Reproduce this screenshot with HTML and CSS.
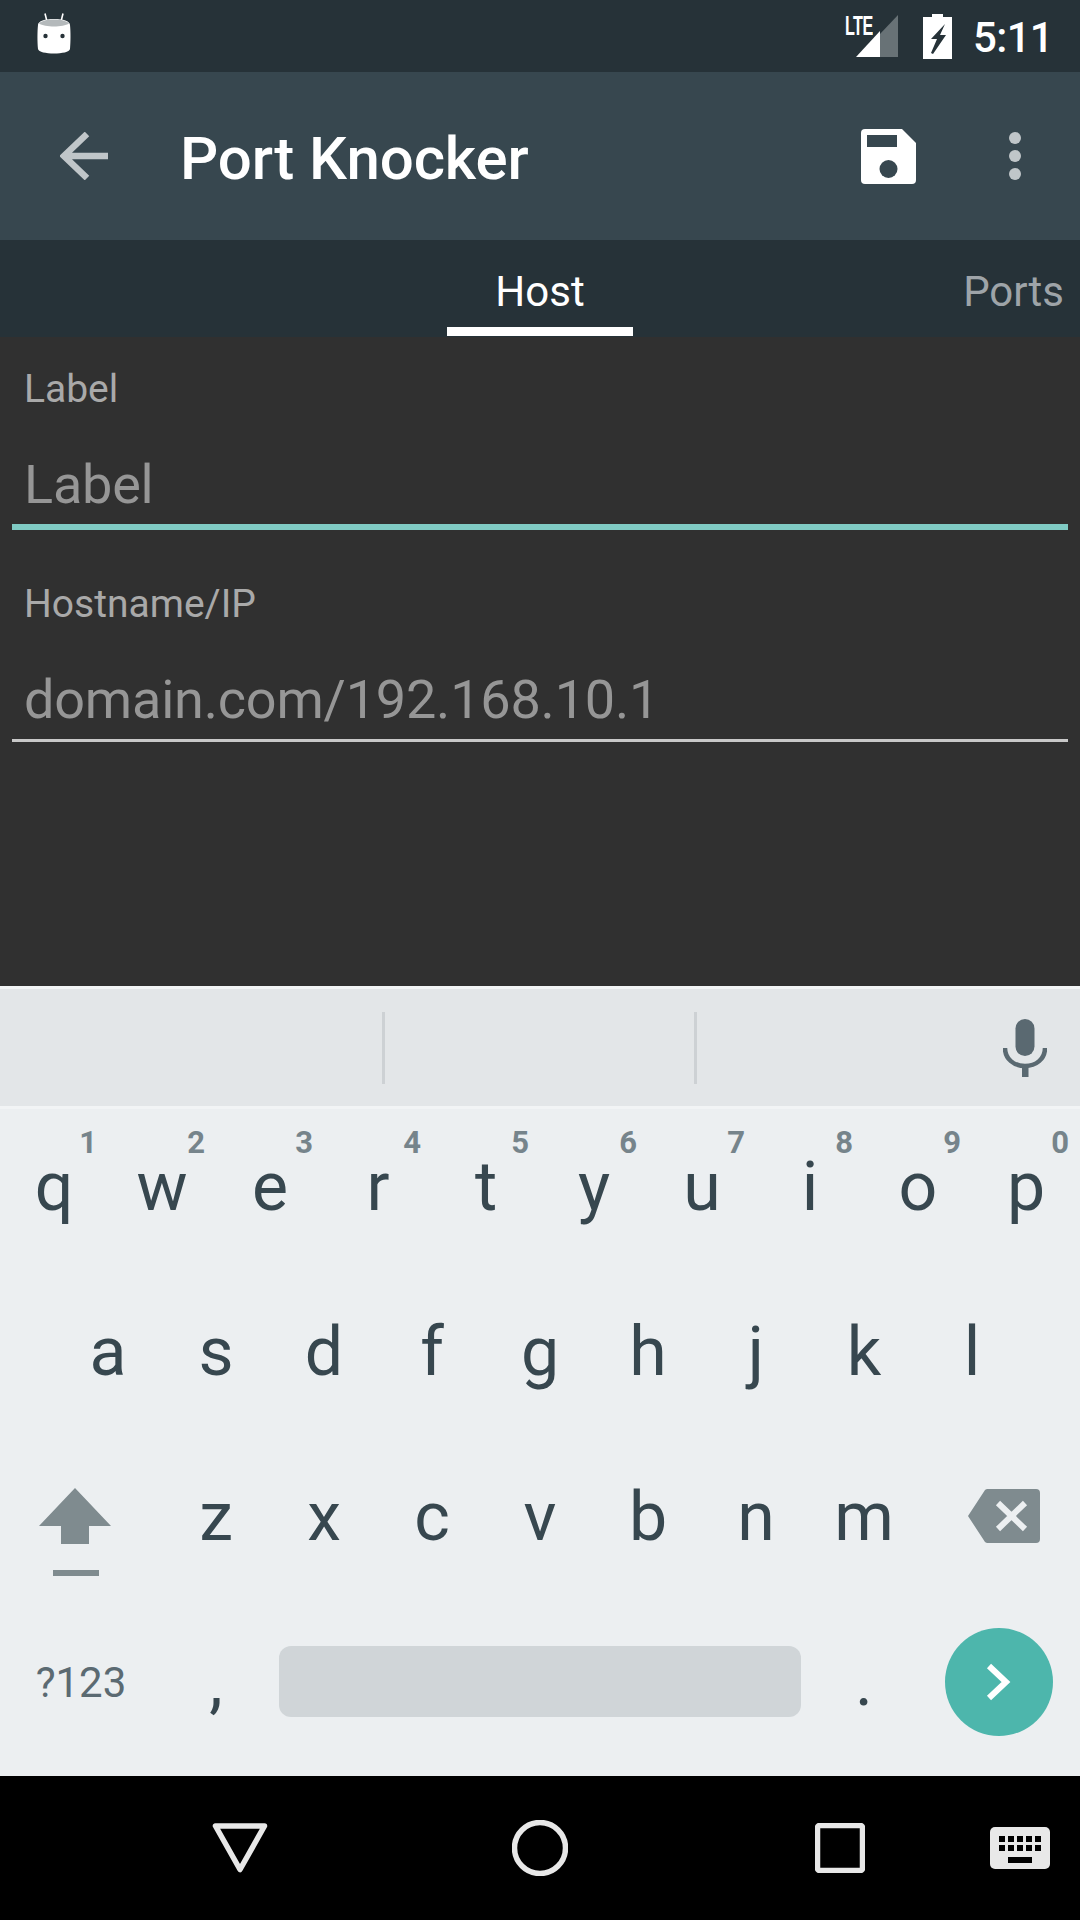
FILE: index.html
```html
<!DOCTYPE html>
<html lang="en">
<head>
<meta charset="utf-8">
<title>Port Knocker</title>
<link rel="stylesheet" href="styles.css">
</head>
<body>
<div class="screen">
  <header class="status">
    <svg class="ic-android" width="34" height="41" viewBox="0 0 34 41">
      <path d="M8 0.5l2 8M26 0.5l-2 8" stroke="#fff" stroke-width="1.6" fill="none"/>
      <path d="M1 12C1 8 8 6 17 6s16 2 16 6c.7 6 .7 17 0 24-.5 3-8 4.500-16 4.500S1.500 39 1 36C.3 29 .3 18 1 12z" fill="#fff"/>
      <path d="M2 10.500C4 8 10 6.500 17 6.500s13 1.500 15 4c-3 2-9 3-15 3s-12-1-15-3z" fill="#b4b9bb"/>
      <circle cx="8.500" cy="23" r="2.200" fill="#263238"/>
      <circle cx="25.500" cy="23" r="2.200" fill="#263238"/>
    </svg>
    <div class="status-right">
      <div class="signal">
        <span class="lte">LTE</span>
        <svg class="ic-signal" width="42" height="42" viewBox="0 0 42 42">
          <path d="M42 0v42H24V19z" fill="#687276"/>
          <path d="M0 42L24 16v26z" fill="#fff"/>
        </svg>
      </div>
      <svg class="ic-battery" width="29" height="45" viewBox="0 0 29 45">
        <path d="M9 0h11v3h9v42H0V3h9z" fill="#fff"/>
        <path d="M22 10L8 25h6l-6 14 2 1 13-19h-6l5-11z" fill="#263238"/>
      </svg>
      <span class="time">5:11</span>
    </div>
  </header>

  <div class="toolbar">
    <svg class="ic-back" width="48" height="48" viewBox="0 0 48 48">
      <path d="M48 24H4M27 2L4 24l23 22" stroke="#c0c6c9" stroke-width="6.500" fill="none"/>
    </svg>
    <h1 class="title">Port Knocker</h1>
    <svg class="ic-save" width="55" height="55" viewBox="0 0 55 55">
      <path d="M4 0h37l14 14v37a4 4 0 0 1-4 4H4a4 4 0 0 1-4-4V4a4 4 0 0 1 4-4z" fill="#fff"/>
      <rect x="6" y="6" width="30" height="12" fill="#37474f"/>
      <circle cx="27.500" cy="40" r="9" fill="#37474f"/>
    </svg>
    <svg class="ic-more" width="12" height="48" viewBox="0 0 12 48">
      <circle cx="6" cy="6" r="6" fill="#c0c6c9"/>
      <circle cx="6" cy="24" r="6" fill="#c0c6c9"/>
      <circle cx="6" cy="42" r="6" fill="#c0c6c9"/>
    </svg>
  </div>

  <nav class="tabs">
    <span></span>
    <span class="tab tab-active">Host</span>
    <span class="tab tab-next">Ports</span>
  </nav>

  <main class="form">
    <section class="field">
      <div class="field-label">Label</div>
      <div class="field-hint field-hint-focus">Label</div>
    </section>
    <section class="field">
      <div class="field-label">Hostname/IP</div>
      <div class="field-hint">domain.com/192.168.10.1</div>
    </section>
  </main>

  <div class="kb-edge"></div>
  <div class="suggestions">
    <span class="divider"></span>
    <span class="divider"></span>
    <svg class="ic-mic" width="44" height="58" viewBox="0 0 44 58">
      <rect x="12.500" y="0" width="19" height="37" rx="9.500" fill="#5a6971"/>
      <path d="M2 29c0 11 9 18 20 18s20-7 20-18" stroke="#5a6971" stroke-width="4.500" fill="none"/>
      <rect x="19" y="46" width="6.500" height="12" fill="#5a6971"/>
    </svg>
  </div>
  <div class="kb-edge-light"></div>

  <div class="keyboard">
    <div class="row row-ten">
      <span class="key">q<sup class="hint">1</sup></span>
      <span class="key">w<sup class="hint">2</sup></span>
      <span class="key">e<sup class="hint">3</sup></span>
      <span class="key">r<sup class="hint">4</sup></span>
      <span class="key">t<sup class="hint">5</sup></span>
      <span class="key">y<sup class="hint">6</sup></span>
      <span class="key">u<sup class="hint">7</sup></span>
      <span class="key">i<sup class="hint">8</sup></span>
      <span class="key">o<sup class="hint">9</sup></span>
      <span class="key">p<sup class="hint">0</sup></span>
    </div>
    <div class="row row-nine">
      <span class="key">a</span><span class="key">s</span><span class="key">d</span>
      <span class="key">f</span><span class="key">g</span><span class="key">h</span>
      <span class="key">j</span><span class="key">k</span><span class="key">l</span>
    </div>
    <div class="row row-wide">
      <svg width="162" height="165" viewBox="0 0 162 165">
        <path d="M75 49l36 38H89v18H61V87H39z" fill="#7f8b8f"/>
        <rect x="53" y="131" width="46" height="6" fill="#7f8b8f"/>
      </svg>
      <span class="key">z</span><span class="key">x</span><span class="key">c</span>
      <span class="key">v</span><span class="key">b</span><span class="key">n</span><span class="key">m</span>
      <svg width="162" height="165" viewBox="0 0 162 165">
        <path d="M50 77l17-26a4 4 0 0 1 3-1h48a4 4 0 0 1 4 4v46a4 4 0 0 1-4 4H70a4 4 0 0 1-3-1z" fill="#7f8b8f"/>
        <path d="M80 64l27 26M107 64L80 90" stroke="#eceff1" stroke-width="6" fill="none"/>
      </svg>
    </div>
    <div class="row row-wide">
      <span class="key key-sym">?123</span>
      <span class="key">,</span>
      <span class="key-space"><span class="space-bar"></span></span>
      <span class="key">.</span>
      <svg width="162" height="165" viewBox="0 0 162 165">
        <circle cx="81" cy="78" r="54" fill="#4db6ac"/>
        <path d="M71 62l17 16-17 16" stroke="#fff" stroke-width="6" fill="none"/>
      </svg>
    </div>
  </div>

  <footer class="navbar">
    <span></span>
    <svg class="nav-icon" width="56" height="50" viewBox="0 0 56 50">
      <path d="M3.500 3h49L28 46.500z" stroke="#e8e8e8" stroke-width="5.500" stroke-linejoin="round" fill="none"/>
    </svg>
    <svg class="nav-icon" width="56" height="56" viewBox="0 0 56 56">
      <circle cx="28" cy="28" r="25.500" stroke="#e8e8e8" stroke-width="5.500" fill="none"/>
    </svg>
    <svg class="nav-icon" width="50" height="50" viewBox="0 0 50 50">
      <rect x="2.500" y="2.500" width="45" height="45" rx="2" stroke="#e8e8e8" stroke-width="5.500" fill="none"/>
    </svg>
    <svg class="nav-kbd" width="60" height="42" viewBox="0 0 60 42">
      <rect width="60" height="42" rx="5" fill="#e8e8e8"/>
      <g fill="#000">
        <rect x="9" y="9" width="6" height="6"/><rect x="18" y="9" width="6" height="6"/><rect x="27" y="9" width="6" height="6"/><rect x="36" y="9" width="6" height="6"/><rect x="45" y="9" width="6" height="6"/>
        <rect x="9" y="18" width="6" height="6"/><rect x="18" y="18" width="6" height="6"/><rect x="27" y="18" width="6" height="6"/><rect x="36" y="18" width="6" height="6"/><rect x="45" y="18" width="6" height="6"/>
        <rect x="18" y="30" width="24" height="6"/>
      </g>
    </svg>
  </footer>
</div>
</body>
</html>
```
FILE: styles.css
```css
* { box-sizing: border-box; }
html, body { margin: 0; padding: 0; }
body { background: #000; font-family: Roboto, "Noto Sans", sans-serif; }
.screen { width: 1080px; height: 1920px; display: flex; flex-direction: column; overflow: hidden; }

.status { height: 72px; background: #263238; display: flex; align-items: flex-start; justify-content: space-between; padding: 13px 27px 0 37px; color: #fff; }
.status-right { display: flex; align-items: flex-start; }
.signal { position: relative; width: 53px; height: 44px; margin-right: 25px; margin-top: 1px; }
.lte { position: absolute; left: 0; top: -1px; font-family: "Liberation Sans", sans-serif; font-weight: 700; font-size: 27px; line-height: 26px; letter-spacing: -1px; transform: scaleX(.6); transform-origin: left top; }
.ic-signal { position: absolute; right: 0; top: 1px; }
.ic-battery { margin-top: 1px; margin-right: 21px; }
.time { font-size: 42px; line-height: 50px; font-weight: 500; letter-spacing: -.7px; }

.toolbar { height: 168px; background: #37474f; display: flex; align-items: center; padding-left: 60px; }
.title { margin: 5px 0 0 72px; flex: 1; font-size: 60px; font-weight: 500; color: #fff; line-height: 72px; letter-spacing: -.1px; }
.ic-save { margin-right: 93px; }
.ic-more { margin-right: 59px; }

.tabs { height: 97px; background: #263238; display: grid; grid-template-columns: 1fr 186px 1fr; }
.tab { font-size: 42px; line-height: 104px; height: 96px; }
.tab-active { color: #fff; text-align: center; border-bottom: 9px solid #fff; height: 96px; }
.tab-next { color: #9ea4a8; justify-self: end; padding-right: 16px; }

.form { height: 649px; background: #303030; padding: 27px 12px 0; display: flex; flex-direction: column; gap: 49px; }
.field-label { font-size: 39px; line-height: 50px; color: #a9a9a9; padding-left: 12px; }
.field-hint { font-size: 54px; line-height: 64px; letter-spacing: -.2px; color: #969696; padding: 39px 0 7px 12px; border-bottom: 3px solid #c8c8c8; }
.field-hint-focus { border-bottom: 6px solid #80cbc4; }

.kb-edge { height: 3px; background: #f2f4f5; }
.suggestions { height: 117px; background: #e3e6e8; display: grid; grid-template-columns: 385px 312px 1fr; align-items: center; }
.divider { width: 3px; height: 72px; background: #cdd1d4; justify-self: end; }
.divider:first-child { grid-column: 1; justify-self: end; }
.divider:nth-child(2) { grid-column: 2; }
.ic-mic { justify-self: end; margin-right: 33px; }
.kb-edge-light { height: 3px; background: #f2f4f5; }

.keyboard { height: 667px; background: #eceff1; }
.row { height: 165px; display: grid; grid-auto-flow: column; }
.row-ten { grid-template-columns: repeat(10, 108px); }
.row-nine { grid-template-columns: repeat(9, 108px); padding-left: 54px; }
.row-wide { grid-template-columns: 162px repeat(7, 108px) 162px; }
.row-wide:last-child { grid-template-columns: 162px 108px 540px 108px 162px; }
.key { position: relative; text-align: center; font-size: 68px; line-height: 157px; color: #37474f; }
.hint { position: absolute; top: 16px; right: 11px; font-size: 31px; line-height: 36px; font-weight: 700; color: #76848b; vertical-align: baseline; }
.key-sym { font-size: 42px; color: #5b6a72; line-height: 157px; }
.key-space { padding: 42px 9px 0; }
.space-bar { display: block; height: 71px; border-radius: 12px; background: #d0d5d8; }

.navbar { height: 144px; background: #000; display: grid; grid-template-columns: 90px 300px 300px 300px 90px; align-items: center; justify-items: center; }
.nav-kbd { justify-self: start; }
```
